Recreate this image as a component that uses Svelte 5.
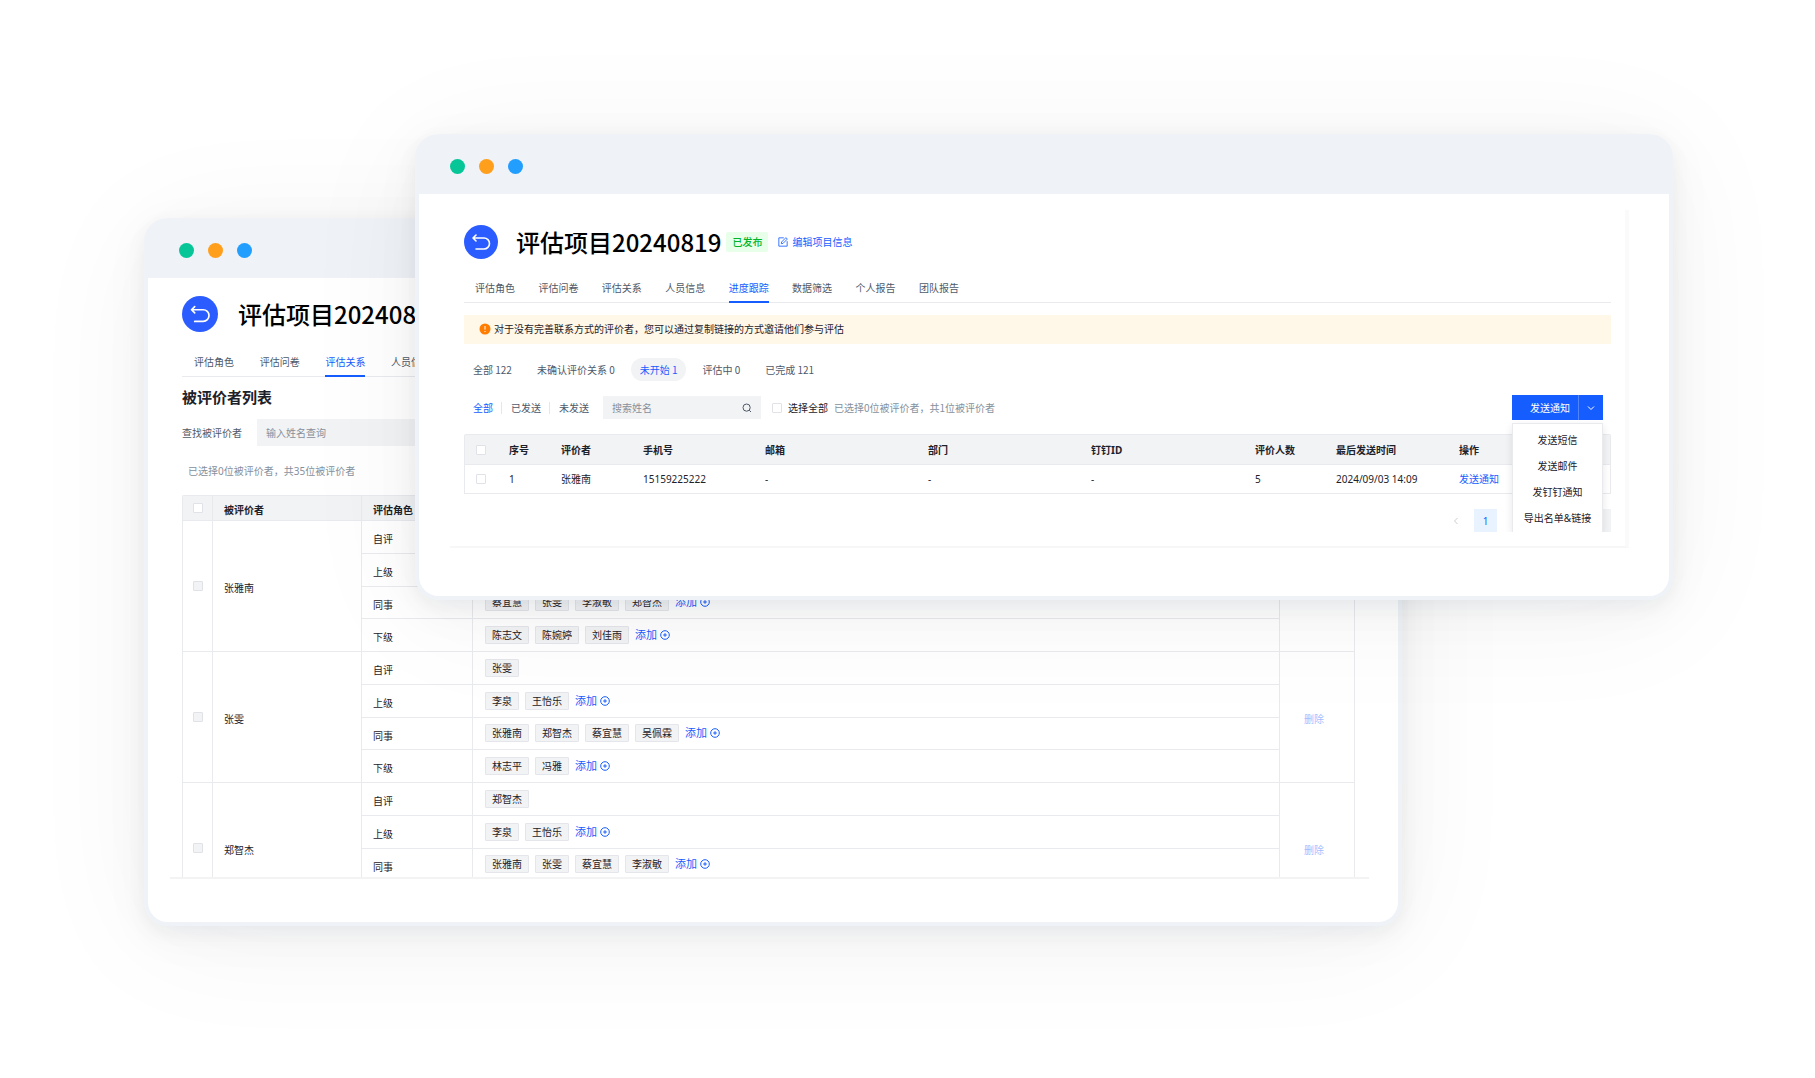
<script>
	const tabs = [
		'评估角色',
		'评估问卷',
		'评估关系',
		'人员信息',
		'进度跟踪',
		'数据筛选',
		'个人报告',
		'团队报告'
	];

	const statuses = [
		{ id: 'all', label: '全部', count: 122 },
		{ id: 'unconfirmed', label: '未确认评价关系', count: 0 },
		{ id: 'pending', label: '未开始', count: 1 },
		{ id: 'running', label: '评估中', count: 0 },
		{ id: 'done', label: '已完成', count: 121 }
	];
	let status = 'pending';

	const sendFilters = ['全部', '已发送', '未发送'];
	let sendFilter = '全部';

	const columns = [
		{ title: '序号', width: 52 },
		{ title: '评价者', width: 82 },
		{ title: '手机号', width: 122 },
		{ title: '邮箱', width: 163 },
		{ title: '部门', width: 163 },
		{ title: '钉钉ID', width: 164 },
		{ title: '评价人数', width: 81 },
		{ title: '最后发送时间', width: 123 }
	];
	const rows = [['1', '张雅南', '15159225222', '-', '-', '-', '5', '2024/09/03 14:09']];

	const menu = ['发送短信', '发送邮件', '发钉钉通知', '导出名单&链接'];

	const people = [
		{
			name: '张雅南',
			roles: [
				{ role: '自评', names: ['张雅南'] },
				{ role: '上级', names: ['李泉', '王怡乐'], add: true },
				{ role: '同事', names: ['蔡宜慧', '张雯', '李淑敏', '郑智杰'], add: true },
				{ role: '下级', names: ['陈志文', '陈婉婷', '刘佳雨'], add: true }
			]
		},
		{
			name: '张雯',
			roles: [
				{ role: '自评', names: ['张雯'] },
				{ role: '上级', names: ['李泉', '王怡乐'], add: true },
				{ role: '同事', names: ['张雅南', '郑智杰', '蔡宜慧', '吴佩霖'], add: true },
				{ role: '下级', names: ['林志平', '冯雅'], add: true }
			]
		},
		{
			name: '郑智杰',
			roles: [
				{ role: '自评', names: ['郑智杰'] },
				{ role: '上级', names: ['李泉', '王怡乐'], add: true },
				{ role: '同事', names: ['张雅南', '张雯', '蔡宜慧', '李淑敏'], add: true }
			]
		}
	];
</script>

<main class="stage">
	<!-- relations window -->
	<section class="window back">
		<div class="bar"><i class="dot green"></i><i class="dot orange"></i><i class="dot blue"></i></div>
		<div class="body">
			<div class="sheet">
				<header class="head">
					<button class="return" aria-label="返回">
						<svg viewBox="0 0 34 34">
							<path d="M12 10 9 13l3 3M9.5 13H20a5.5 5.5 0 0 1 0 11h-8" />
						</svg>
					</button>
					<h1>评估项目20240819</h1>
				</header>
				<nav class="tabs">
					<div class="tab-list">
						{#each tabs as tab}
							<a href="#tab" class:active={tab === '评估关系'}>{tab}</a>
						{/each}
					</div>
				</nav>
				<h2>被评价者列表</h2>
				<div class="find">
					<label for="find-name">查找被评价者</label>
					<input id="find-name" type="text" placeholder="输入姓名查询" />
				</div>
				<p class="summary">已选择0位被评价者，共35位被评价者</p>
				<div class="clip">
					<table class="relations">
						<colgroup>
							<col class="c-check" /><col class="c-name" /><col class="c-role" /><col /><col class="c-op" />
						</colgroup>
						<thead>
							<tr>
								<th class="check"><input type="checkbox" aria-label="全选" /></th>
								<th>被评价者</th>
								<th>评估角色</th>
								<th>评价者</th>
								<th>操作</th>
							</tr>
						</thead>
						{#each people as person}
							<tbody>
								{#each person.roles as item, i}
									<tr>
										{#if i === 0}
											<td class="check" rowspan="4">
												<input type="checkbox" disabled aria-label={person.name} />
											</td>
											<td rowspan="4">{person.name}</td>
										{/if}
										<td>{item.role}</td>
										<td class="raters">
											<div class="tags">
												{#each item.names as name}
													<span class="tag">{name}</span>
												{/each}
												{#if item.add}
													<button class="add">
														添加
														<svg viewBox="0 0 10 10">
															<circle cx="5" cy="5" r="4.3" />
															<path d="M5 3.2v3.6M3.2 5h3.6" />
														</svg>
													</button>
												{/if}
											</div>
										</td>
										{#if i === 0}
											<td class="op" rowspan="4"><button class="remove">删除</button></td>
										{/if}
									</tr>
								{/each}
								{#if person.roles.length < 4}
									<tr><td></td><td></td></tr>
								{/if}
							</tbody>
						{/each}
					</table>
				</div>
			</div>
		</div>
	</section>

	<!-- progress window -->
	<section class="window front">
		<div class="bar"><i class="dot green"></i><i class="dot orange"></i><i class="dot blue"></i></div>
		<div class="body">
			<div class="sheet">
				<header class="head">
					<button class="return" aria-label="返回">
						<svg viewBox="0 0 34 34">
							<path d="M12 10 9 13l3 3M9.5 13H20a5.5 5.5 0 0 1 0 11h-8" />
						</svg>
					</button>
					<h1>评估项目20240819</h1>
					<span class="state">已发布</span>
					<a class="edit" href="#edit">
						<svg viewBox="0 0 12 12">
							<path d="M7 1H1v10h10V5M4 8l.3-2L9.5.8l1.7 1.7L6 7.7z" />
						</svg>
						编辑项目信息
					</a>
				</header>
				<nav class="tabs">
					<div class="tab-list">
						{#each tabs as tab}
							<a href="#tab" class:active={tab === '进度跟踪'}>{tab}</a>
						{/each}
					</div>
				</nav>
				<div class="notice">
					<svg viewBox="0 0 12 12">
						<circle cx="6" cy="6" r="5.5" />
						<path d="M6 3v3.6M6 8v1" />
					</svg>
					对于没有完善联系方式的评价者，您可以通过复制链接的方式邀请他们参与评估
				</div>
				<div class="statuses">
					{#each statuses as item}
						<button class:active={status === item.id} on:click={() => (status = item.id)}>
							{item.label} {item.count}
						</button>
					{/each}
				</div>
				<div class="toolbar">
					<div class="sent">
						{#each sendFilters as item}
							<button class:active={sendFilter === item} on:click={() => (sendFilter = item)}>
								{item}
							</button>
						{/each}
					</div>
					<div class="search">
						<input type="text" placeholder="搜索姓名" aria-label="搜索姓名" />
						<svg viewBox="0 0 10 10">
							<circle cx="4.6" cy="4.6" r="3.6" />
							<path d="M7.2 7.2 9 9" />
						</svg>
					</div>
					<label class="select-all"><input type="checkbox" />选择全部</label>
					<span class="selected">已选择0位被评价者，共1位被评价者</span>
					<div class="send">
						<button class="send-main">发送通知</button>
						<button class="send-more" aria-label="更多">
							<svg viewBox="0 0 8 8"><path d="m1 2.5 3 3 3-3" /></svg>
						</button>
						<ul class="menu">
							{#each menu as item}
								<li><button>{item}</button></li>
							{/each}
						</ul>
					</div>
				</div>
				<table class="progress">
					<colgroup>
						<col class="c-check" />
						{#each columns as column}
							<col style="width: {column.width}px" />
						{/each}
						<col />
					</colgroup>
					<thead>
						<tr>
							<th class="check"><input type="checkbox" aria-label="全选" /></th>
							{#each columns as column}
								<th>{column.title}</th>
							{/each}
							<th>操作</th>
						</tr>
					</thead>
					<tbody>
						{#each rows as row}
							<tr>
								<td class="check"><input type="checkbox" aria-label={row[1]} /></td>
								{#each row as cell}
									<td>{cell}</td>
								{/each}
								<td><a href="#send">发送通知</a></td>
							</tr>
						{/each}
					</tbody>
				</table>
				<div class="pager">
					<button class="prev" aria-label="上一页">
						<svg viewBox="0 0 8 8"><path d="M5.5 1 2.5 4l3 3" /></svg>
					</button>
					<button class="page">1</button>
					<span class="size"></span>
				</div>
			</div>
		</div>
	</section>
</main>

<style>
	:global(body) {
		margin: 0;
		background: #fff;
	}
	.stage {
		position: relative;
		min-height: 100vh;
		overflow: hidden;
		font-family: 'Noto Sans', 'Noto Sans CJK SC', sans-serif;
		font-size: 10px;
		line-height: 16px;
		color: #1d2129;
	}
	.stage *,
	.stage *::before {
		box-sizing: border-box;
	}
	h1,
	h2,
	p,
	ul {
		margin: 0;
		padding: 0;
	}
	button,
	input {
		margin: 0;
		padding: 0;
		border: 0;
		background: none;
		color: inherit;
		font: inherit;
		outline: none;
	}
	button {
		cursor: pointer;
	}
	a {
		color: #165dff;
		text-decoration: none;
	}
	svg {
		display: block;
		flex: none;
		fill: none;
		stroke: currentColor;
	}
	input::placeholder {
		color: #86909c;
		opacity: 1;
	}
	input[type='checkbox'] {
		display: block;
		flex: none;
		appearance: none;
		width: 10px;
		height: 10px;
		border: 1px solid #e0e2e8;
		border-radius: 1px;
		background: #fff;
	}
	input[type='checkbox']:disabled {
		background: #f2f3f5;
	}

	/* window chrome */
	.window {
		position: absolute;
		border: 4px solid #eff3f8;
		border-top: 0;
		border-radius: 24px;
		background: #fff;
		box-shadow:
			0 6px 20px rgba(20, 30, 50, 0.05),
			0 10px 50px rgba(20, 30, 40, 0.04),
			0 12px 130px rgba(20, 35, 30, 0.05);
	}
	.back {
		top: 218px;
		left: 144px;
		right: 413px;
	}
	.front {
		top: 134px;
		left: 415px;
		right: 142px;
	}
	.bar {
		display: flex;
		align-items: center;
		gap: 14px;
		height: 60px;
		margin: 0 -4px;
		padding: 5px 35px 0;
		border-radius: 24px 24px 0 0;
		background: #eff3f8;
	}
	.dot {
		width: 15px;
		height: 15px;
		border-radius: 50%;
	}
	.green {
		background: #06c698;
	}
	.orange {
		background: #ff9f1c;
	}
	.blue {
		background: #229eff;
	}
	.front .body {
		padding: 16px 40px 48px 31px;
	}
	.front .sheet {
		padding: 15px 14px 14px;
		border-right: 4px solid #fafafa;
		border-bottom: 2px solid #f7f7f7;
	}
	.back .body {
		padding: 18px 29px 43px 22px;
	}
	.back .sheet {
		padding: 0 14px 0 12px;
		border-bottom: 2px solid #f3f3f4;
	}

	/* project header */
	.head {
		display: flex;
		align-items: center;
		height: 34px;
	}
	.back .head {
		height: 36px;
	}
	.return {
		flex: none;
		width: 34px;
		height: 34px;
		border-radius: 50%;
		background: #2b5cff;
		color: #fff;
	}
	.back .return {
		width: 36px;
		height: 36px;
	}
	.return path {
		stroke-width: 1.6;
		stroke-linecap: round;
		stroke-linejoin: round;
	}
	h1 {
		margin-left: 18px;
		font-family: 'Noto Sans CJK SC', sans-serif;
		font-size: 24px;
		font-weight: 500;
		line-height: 34px;
		color: #000;
		white-space: nowrap;
	}
	.back h1 {
		margin-left: 20px;
	}
	.state {
		margin-left: 5px;
		padding: 2px 6px;
		border-radius: 2px;
		background: #e8ffea;
		color: #00b42a;
		font-weight: 500;
	}
	.edit {
		display: flex;
		align-items: center;
		gap: 4px;
		margin-left: 10px;
	}
	.edit svg {
		width: 10px;
		height: 10px;
	}

	.tabs {
		height: 28px;
		margin-top: 16px;
		padding-left: 11px;
		border-bottom: 1px solid #e9eaee;
		line-height: 26px;
	}
	.tab-list {
		display: flex;
		justify-content: space-between;
		width: 484px;
	}
	.back .tabs {
		height: 29px;
		padding-left: 12px;
		line-height: 28px;
	}
	.back .tab-list {
		width: 500px;
	}
	.tabs a {
		flex: none;
		height: 28px;
		color: #4e5969;
	}
	.tabs .active {
		border-bottom: 2px solid #165dff;
		color: #165dff;
	}
	.back .tabs .active {
		height: 29px;
	}

	/* progress page */
	.notice {
		display: flex;
		align-items: center;
		gap: 3px;
		height: 29px;
		margin-top: 12px;
		padding: 0 15px 2px;
		background: #fff7e8;
	}
	.notice svg {
		width: 12px;
		height: 12px;
	}
	.notice circle {
		fill: #ff7d00;
		stroke: none;
	}
	.notice path {
		stroke: #fff;
	}
	.statuses {
		display: flex;
		gap: 7px;
		margin-top: 14px;
	}
	.statuses button {
		height: 23px;
		padding: 0 9px;
		border-radius: 12px;
		color: #4e5969;
		font-family: 'Noto Sans CJK SC', sans-serif;
	}
	.statuses .active {
		background: #f2f3f5;
		color: #165dff;
	}
	.toolbar {
		display: flex;
		align-items: center;
		height: 25px;
		margin-top: 14px;
	}
	.sent {
		display: flex;
	}
	.sent button {
		padding: 0 8px 0 9px;
		color: #4e5969;
		line-height: 12px;
	}
	.sent button + button {
		border-left: 1px solid #e5e6eb;
	}
	.sent .active {
		color: #165dff;
	}
	.search {
		display: flex;
		align-items: center;
		width: 158px;
		height: 23px;
		margin-left: 6px;
		padding: 0 9px;
		background: #f2f3f5;
	}
	.search input {
		flex: 1;
		min-width: 0;
	}
	.search svg {
		width: 10px;
		height: 10px;
		color: #4e5969;
	}
	.select-all {
		display: flex;
		align-items: center;
		gap: 6px;
		margin-left: 11px;
	}
	.selected {
		margin-left: 6px;
		color: #86909c;
		font-family: 'Noto Sans CJK SC', sans-serif;
	}
	.send {
		position: relative;
		display: flex;
		width: 91px;
		height: 25px;
		margin-left: auto;
		margin-right: 8px;
		background: #165dff;
		color: #fff;
	}
	.send-main {
		flex: 1;
		padding-left: 10px;
	}
	.send-more {
		width: 25px;
		padding-left: 8px;
		border-left: 1px solid #4f85ff;
	}
	.send-more svg {
		width: 8px;
		height: 8px;
	}
	.menu {
		position: absolute;
		z-index: 1;
		top: 28px;
		left: 0;
		width: 100%;
		height: 109px;
		padding-top: 3px;
		border: 1px solid #e9eaee;
		border-bottom: 0;
		background: #fff;
		box-shadow: 0 3px 8px rgba(0, 0, 0, 0.1);
		clip-path: inset(-2px -12px 0);
		color: #1d2129;
		list-style: none;
	}
	.menu button {
		display: block;
		width: 100%;
		height: 26px;
		text-align: center;
		white-space: nowrap;
	}

	table {
		width: 100%;
		table-layout: fixed;
		border-collapse: separate;
		border-spacing: 0;
	}
	th,
	td {
		border-bottom: 1px solid #e9eaee;
		text-align: left;
	}
	th {
		background: #f2f3f5;
		font-weight: 700;
	}
	.progress {
		margin-top: 14px;
		border: 1px solid #e9eaee;
		border-bottom-width: 0;
		border-radius: 2px 2px 0 0;
	}
	.progress .c-check {
		width: 33px;
	}
	.progress th,
	.progress td {
		height: 29px;
		padding: 0 11px;
		white-space: nowrap;
	}
	.progress th {
		height: 30px;
	}
	.pager {
		display: flex;
		align-items: center;
		height: 23px;
		margin-top: 15px;
	}
	.prev {
		margin-left: auto;
		color: #c9cdd4;
	}
	.prev svg {
		width: 8px;
		height: 8px;
	}
	.page {
		width: 23px;
		height: 23px;
		margin-left: 14px;
		background: #e8f3ff;
		color: #165dff;
	}
	.size {
		width: 70px;
		height: 23px;
		margin-left: 44px;
		background: #f2f3f5;
	}

	/* relations page */
	h2 {
		margin-top: 10px;
		font-size: 15px;
		font-weight: 700;
		line-height: 20px;
	}
	.find {
		display: flex;
		align-items: center;
		gap: 15px;
		margin-top: 12px;
		color: #4e5969;
	}
	.find input {
		width: 240px;
		height: 27px;
		padding: 0 9px;
		background: #f2f3f5;
	}
	.summary {
		margin-top: 15px;
		padding-left: 6px;
		color: #86909c;
		line-height: 20px;
	}
	.clip {
		height: 382px;
		margin-top: 14px;
		overflow: hidden;
	}
	.relations {
		border-top: 1px solid #e9eaed;
		border-left: 1px solid #e9eaed;
		border-radius: 2px 0 0 0;
	}
	.relations .c-check {
		width: 30px;
	}
	.relations .c-name {
		width: 149px;
	}
	.relations .c-role {
		width: 111px;
	}
	.relations .c-op {
		width: 75px;
	}
	.relations th,
	.relations td {
		height: 33px;
		padding: 4px 11px 0;
		border-color: #e9eaed;
		border-right: 1px solid #e9eaed;
	}
	.relations th {
		height: 25px;
	}
	/* every group of four adds up to 131px */
	.relations tr:nth-child(3) td {
		height: 32px;
	}
	.relations .check {
		padding: 0 10px;
	}
	.relations .raters {
		padding: 0 12px 1px;
	}
	.relations .op {
		padding-left: 24px;
	}
	.tags {
		display: flex;
		align-items: center;
		gap: 6px;
	}
	.tag {
		height: 18px;
		padding: 0 6px;
		border: 1px solid #e5e6eb;
		border-radius: 1px;
		background: #f2f3f5;
	}
	.add {
		display: flex;
		align-items: center;
		gap: 3px;
		color: #165dff;
		font-size: 11px;
	}
	.add svg {
		width: 10px;
		height: 10px;
	}
	.remove {
		color: #a3c0ff;
	}
</style>
